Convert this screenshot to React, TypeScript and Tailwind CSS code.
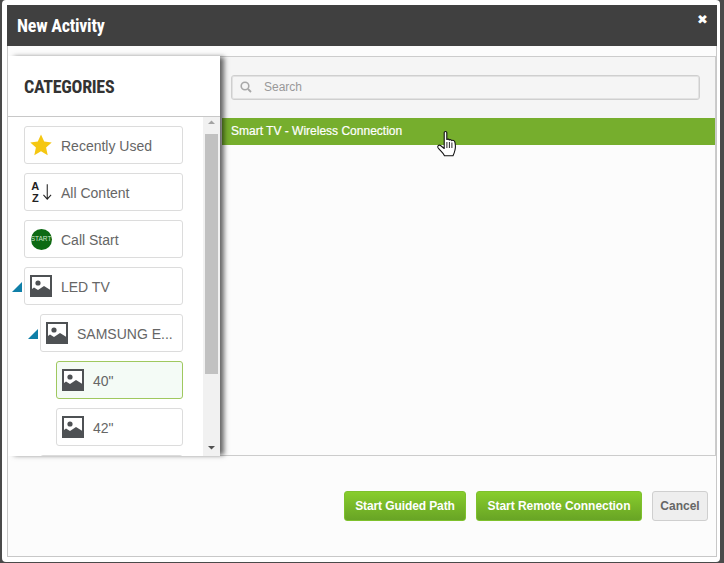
const ImgIcon = () => (
  <svg width="22" height="22" viewBox="0 0 22 22" className="shrink-0">
    <rect x="0" y="0" width="22" height="22" fill="#4e5154" />
    <rect x="2" y="2" width="18" height="18" fill="#fff" />
    <circle cx="8" cy="8" r="2.6" fill="#4e5154" />
    <path d="M0 22V15.5L4 12.5L8 15L14 11L22 16V22Z" fill="#4e5154" />
  </svg>
);

const Star = () => (
  <svg width="22" height="22" viewBox="0 0 22 22" className="shrink-0">
    <path d="M11 0.5L14.2 7.6L21.7 8.4L16.1 13.6L17.7 21.2L11 17.3L4.3 21.2L5.9 13.6L0.3 8.4L7.8 7.6Z" fill="#f5c711" />
  </svg>
);

const Az = () => (
  <div className="flex items-center w-[22px] h-[22px] shrink-0">
    <div className="flex flex-col items-center w-[11px] text-[11px] leading-[12px] font-bold text-[#222] font-['Liberation_Sans',sans-serif]">
      <span>A</span>
      <span>Z</span>
    </div>
    <svg width="11" height="18" viewBox="0 0 11 18" className="ml-[1px]">
      <path d="M5.5 1V16.5M1.5 12L5.5 16.5L9.5 12" stroke="#222" strokeWidth="1.1" fill="none" />
    </svg>
  </div>
);

const StartIcon = () => (
  <div className="flex items-center justify-center w-[21px] h-[21px] rounded-full bg-[#0d6a14] shrink-0 text-[6.5px] leading-none text-[#cfe6cf] font-['Liberation_Sans',sans-serif] overflow-hidden">
    START
  </div>
);

const Tri = () => (
  <svg width="10" height="10" viewBox="0 0 10 10" className="shrink-0">
    <path d="M0 10L10 0V10Z" fill="#0f7fa8" />
  </svg>
);

function Item({
  icon,
  label,
  indent,
  arrow,
  active,
}: {
  icon?: React.ReactNode;
  label?: string;
  indent: string;
  arrow?: boolean;
  active?: boolean;
}) {
  return (
    <div className={`flex items-center shrink-0 ${indent}`}>
      <div className="w-[16px] shrink-0 flex justify-start pl-[4px] -ml-[16px] pt-[1px]">{arrow ? <Tri /> : null}</div>
      <div
        className={`flex items-center flex-1 h-[38px] rounded-[3px] border pl-[5px] ${
          active ? "border-[#9fc85f] bg-[#f4fbf6]" : "border-[#dcdcdc] bg-white"
        }`}
      >
        <div className="w-[22px] h-[22px] flex items-center justify-center shrink-0">{icon}</div>
        {label ? <span className="ml-[9px] pt-[2px] text-[14px] text-[#666] whitespace-nowrap">{label}</span> : null}
      </div>
    </div>
  );
}

export default function App() {
  return (
    <div className="w-[724px] h-[563px] bg-[#4a4a4a] overflow-hidden font-['Liberation_Sans',Arial,sans-serif]">
      <div className="w-[718px] h-[562px] ml-[2px] bg-white rounded-[4px] p-[5px] pr-[3px] flex flex-col">
        <div className="h-[41px] shrink-0 bg-[#404040] flex items-center justify-between pl-[10px] pr-[9px]">
          <span className="text-[18px] font-bold text-white font-['Roboto',sans-serif] [font-stretch:75%] tracking-[-0.25px]">
            New Activity
          </span>
          <span className="text-[13px] text-white font-['DejaVu_Sans',sans-serif] -mt-[12px]">✖</span>
        </div>
        <div className="flex-1 min-h-0 flex flex-col bg-[#fcfcfc] border border-t-0 border-[#c8c8c8]">
          <div className="h-[410px] shrink-0 flex pt-[10px]">
            <div className="relative z-10 w-[212px] shrink-0 flex flex-col bg-white shadow-[5px_0_5px_-1px_rgba(0,0,0,0.6)]">
              <div className="h-[61px] shrink-0 flex items-center pl-[16px] pt-[1px] border-b border-[#c8c8c8]">
                <span className="text-[18px] font-bold text-[#333] font-['Roboto',sans-serif] [font-stretch:75%] tracking-[-0.3px]">
                  CATEGORIES
                </span>
              </div>
              <div className="flex-1 min-h-0 flex">
                <div className="flex-1 min-w-0 overflow-hidden flex flex-col gap-[9px] pt-[9px] pl-[16px] pr-[20px]">
                  <Item icon={<Star />} label="Recently Used" indent="" />
                  <Item icon={<Az />} label="All Content" indent="" />
                  <Item icon={<StartIcon />} label="Call Start" indent="" />
                  <Item icon={<ImgIcon />} label="LED TV" indent="" arrow />
                  <Item icon={<ImgIcon />} label="SAMSUNG E..." indent="pl-[16px]" arrow />
                  <Item icon={<ImgIcon />} label={'40"'} indent="pl-[32px]" active />
                  <Item icon={<ImgIcon />} label={'42"'} indent="pl-[32px]" />
                  <Item indent="pl-[16px]" />
                </div>
                <div className="w-[17px] shrink-0 bg-[#f1f1f1] flex flex-col items-center">
                  <svg width="17" height="17" viewBox="0 0 17 17" className="shrink-0">
                    <path d="M5 7L8.5 3.5L12 7Z" fill="#a3a3a3" />
                  </svg>
                  <div className="w-[13px] h-[240px] bg-[#c1c1c1] shrink-0" />
                  <div className="flex-1" />
                  <svg width="17" height="15" viewBox="0 0 17 15" className="shrink-0">
                    <path d="M5 5L8.5 8.5L12 5Z" fill="#505050" />
                  </svg>
                </div>
              </div>
            </div>
            <div className="flex-1 min-w-0 flex flex-col border-t border-b border-r border-[#cccccc] bg-[#fcfcfc] relative">
              <div className="h-[61px] shrink-0 bg-[#f5f5f5] pt-[18px] pl-[11px] pr-[15px]">
                <div className="h-[25px] flex items-center border border-[#cfcfcf] rounded-[3px] bg-[#f5f5f5] pl-[8px] pb-[1px] shadow-[inset_0_0_0_1px_#e2e2e2]">
                  <svg width="12" height="12" viewBox="0 0 12 12" className="shrink-0">
                    <circle cx="5" cy="5" r="3.8" stroke="#a8a8a8" strokeWidth="1.6" fill="none" />
                    <path d="M8 8L11 11" stroke="#a8a8a8" strokeWidth="1.8" />
                  </svg>
                  <span className="ml-[12px] text-[12px] text-[#999]">Search</span>
                </div>
              </div>
              <div className="h-[27px] shrink-0 ml-[2px] bg-[#76ae2d] flex items-center pl-[9px] pb-[2px]">
                <span className="text-[12px] font-normal text-white [-webkit-text-stroke:0.2px_white]">Smart TV - Wireless Connection</span>
              </div>
              <svg width="20" height="26" viewBox="0 0 20 26" className="absolute left-[217px] top-[74px]">
                <path
                  d="M7.2 1.6C7.2 0.2 9.8 0.2 9.8 1.6V8.5C10.8 7.8 12 8 12.3 9C13.3 8.3 14.5 8.6 14.8 9.6C15.8 9 17.4 9.4 17.8 10.8C18.4 13 18.6 16.5 18 19C17.6 21 16.8 23 16 24.7H7.5C6.5 22 3.5 20 1.2 17C0 15 1.8 13.5 3.5 14.5L7.2 17.5Z"
                  fill="#fff"
                  stroke="#111"
                  strokeWidth="1.1"
                  strokeLinejoin="round"
                />
                <path d="M9.9 11V17M12.4 11V17M14.9 11.5V17" stroke="#111" strokeWidth="0.9" />
              </svg>
            </div>
          </div>
          <div className="flex-1 flex items-start justify-end gap-[10px] pt-[35px] pr-[8px]">
            <button className="h-[30px] w-[122px] rounded-[3px] border border-[#7ec12c] bg-gradient-to-b from-[#88cd2c] to-[#68a425] text-[12px] font-bold text-white tracking-[-0.1px]">
              Start Guided Path
            </button>
            <button className="h-[30px] w-[166px] rounded-[3px] border border-[#7ec12c] bg-gradient-to-b from-[#88cd2c] to-[#68a425] text-[12px] font-bold text-white tracking-[-0.05px]">
              Start Remote Connection
            </button>
            <button className="h-[30px] w-[56px] rounded-[3px] border border-[#cfcfcf] bg-[#eeeeee] text-[12px] font-bold text-[#666]">
              Cancel
            </button>
          </div>
        </div>
      </div>
    </div>
  );
}
